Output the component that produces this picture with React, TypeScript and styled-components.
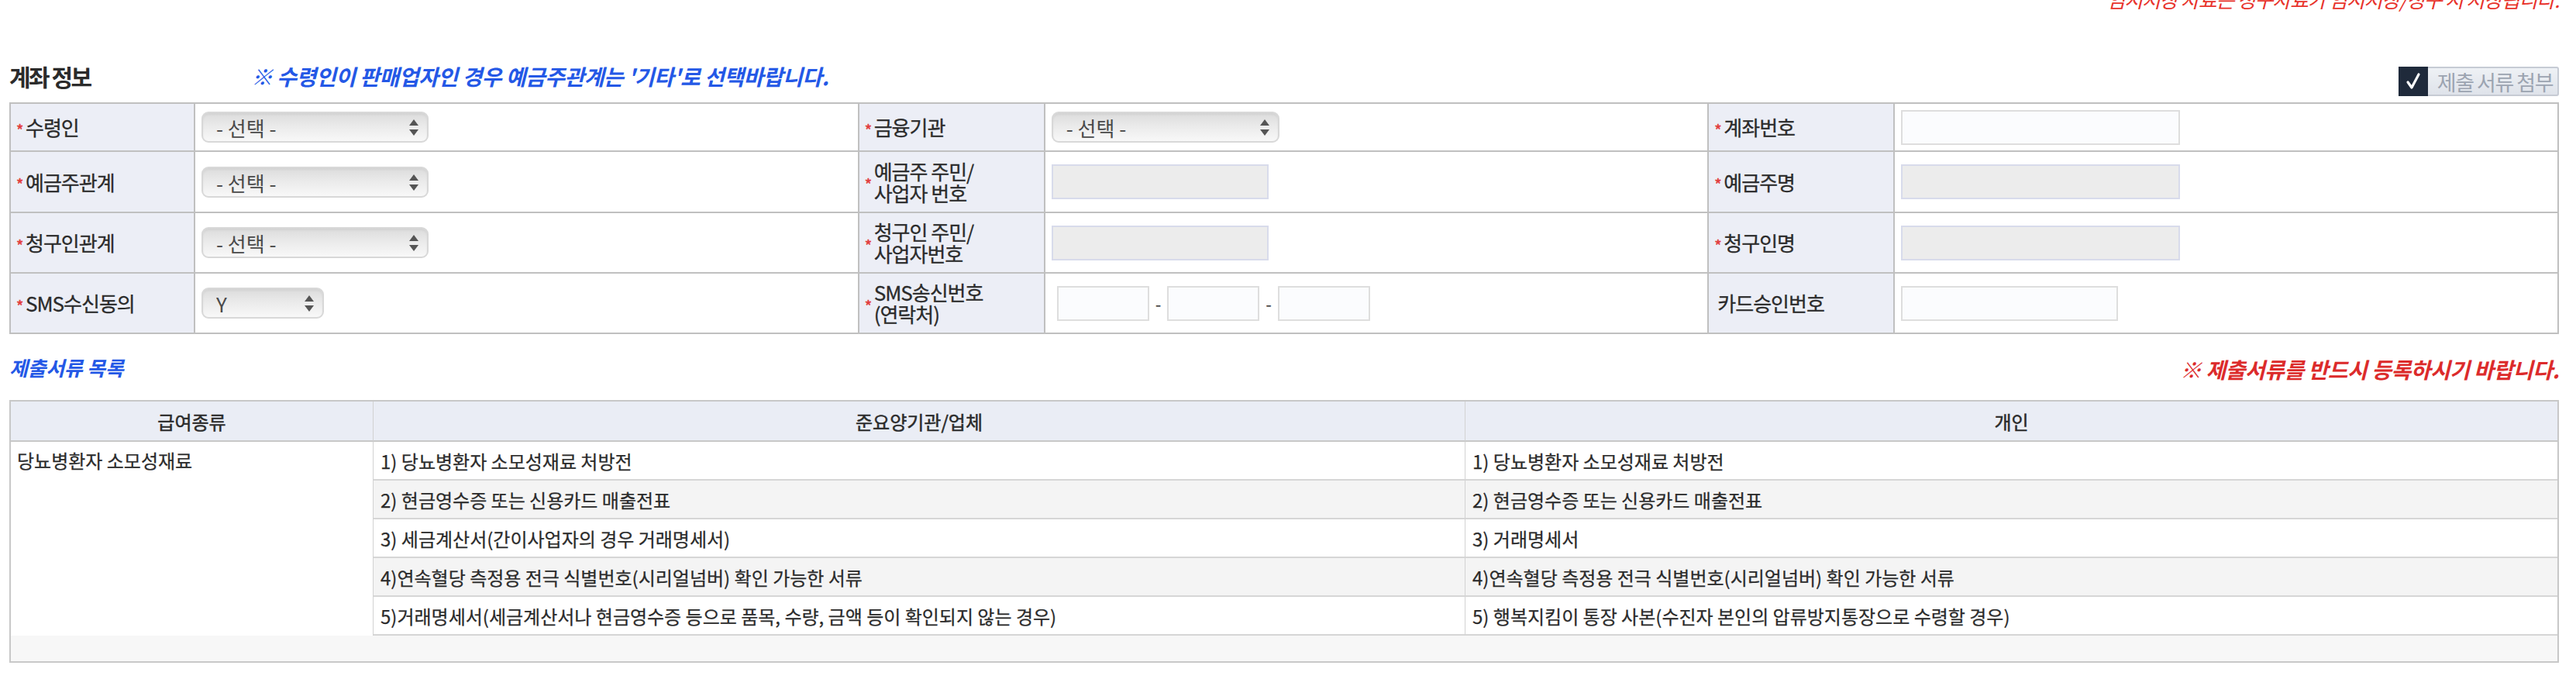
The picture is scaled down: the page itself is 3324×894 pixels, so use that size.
import React from 'react';
import styled, { createGlobalStyle } from 'styled-components';

const GlobalStyle = createGlobalStyle`
  html, body {
    margin: 0;
    padding: 0;
    background: #fff;
  }
  body {
    font-family: "Noto Sans CJK KR", "Noto Sans", sans-serif;
    color: #2b2b2b;
  }
  * {
    box-sizing: border-box;
  }
`;

const LINE = '#c0c0c0';

type Field =
  | { kind: 'select'; value: string; width: number }
  | { kind: 'input'; width: number; disabled?: boolean }
  | { kind: 'phone' };

type Cell = { label: string[]; required: boolean; field: Field };

const formRows: Cell[][] = [
  [
    { label: ['수령인'], required: true, field: { kind: 'select', value: '- 선택 -', width: 293 } },
    { label: ['금융기관'], required: true, field: { kind: 'select', value: '- 선택 -', width: 294 } },
    { label: ['계좌번호'], required: true, field: { kind: 'input', width: 360 } },
  ],
  [
    { label: ['예금주관계'], required: true, field: { kind: 'select', value: '- 선택 -', width: 293 } },
    { label: ['예금주 주민/', '사업자 번호'], required: true, field: { kind: 'input', width: 280, disabled: true } },
    { label: ['예금주명'], required: true, field: { kind: 'input', width: 360, disabled: true } },
  ],
  [
    { label: ['청구인관계'], required: true, field: { kind: 'select', value: '- 선택 -', width: 293 } },
    { label: ['청구인 주민/', '사업자번호'], required: true, field: { kind: 'input', width: 280, disabled: true } },
    { label: ['청구인명'], required: true, field: { kind: 'input', width: 360, disabled: true } },
  ],
  [
    { label: ['SMS수신동의'], required: true, field: { kind: 'select', value: 'Y', width: 158 } },
    { label: ['SMS송신번호', '(연락처)'], required: true, field: { kind: 'phone' } },
    { label: ['카드승인번호'], required: false, field: { kind: 'input', width: 280 } },
  ],
];

const agencyDocs = [
  '1) 당뇨병환자 소모성재료 처방전',
  '2) 현금영수증 또는 신용카드 매출전표',
  '3) 세금계산서(간이사업자의 경우 거래명세서)',
  '4)연속혈당 측정용 전극 식별번호(시리얼넘버) 확인 가능한 서류',
  '5)거래명세서(세금계산서나 현금영수증 등으로 품목, 수량, 금액 등이 확인되지 않는 경우)',
];

const personalDocs = [
  '1) 당뇨병환자 소모성재료 처방전',
  '2) 현금영수증 또는 신용카드 매출전표',
  '3) 거래명세서',
  '4)연속혈당 측정용 전극 식별번호(시리얼넘버) 확인 가능한 서류',
  '5) 행복지킴이 통장 사본(수진자 본인의 압류방지통장으로 수령할 경우)',
];

const Page = styled.div`
  display: flow-root;
  padding: 0 22px 0 12px;
`;

const TopNote = styled.p`
  margin: -17px 0 0;
  text-align: right;
  font-size: 26px;
  line-height: 32px;
  font-style: italic;
  color: #e8332b;
  letter-spacing: -1.2px;
`;

const SectionHead = styled.div`
  display: flex;
  align-items: flex-start;
  margin-top: 63px;
  padding-bottom: 8px;
`;

const Title = styled.h2`
  margin: 0;
  width: 312px;
  flex-shrink: 0;
  font-size: 30px;
  line-height: 40px;
  font-weight: 700;
  color: #2b2b2b;
  letter-spacing: -2.5px;
`;

const Note = styled.p<{ $tone: 'blue' | 'red' }>`
  margin: 0;
  font-size: 28px;
  line-height: 40px;
  font-weight: 700;
  font-style: italic;
  letter-spacing: -0.5px;
  color: ${p => (p.$tone === 'blue' ? '#2458e6' : '#dc2b2b')};
`;

const AttachButton = styled.button`
  margin-left: auto;
  margin-top: 8px;
  display: flex;
  align-items: stretch;
  height: 38px;
  padding: 0;
  border: 2px solid #c6cbd4;
  border-radius: 3px;
  background: linear-gradient(#eef1f5, #dfe3ea);
  font-family: inherit;
  cursor: pointer;
`;

const CheckBox = styled.span`
  width: 38px;
  margin: -2px 0 -2px -2px;
  background: #1f2a3b;
  display: flex;
  align-items: center;
  justify-content: center;
`;

const ButtonLabel = styled.span`
  display: flex;
  align-items: center;
  padding: 0 6px 0 12px;
  font-size: 27px;
  color: #9ca4b1;
  letter-spacing: -1.5px;
`;

const FormGrid = styled.div`
  display: grid;
  grid-template-columns: 238px 1fr 240px 1fr 240px 1fr;
  grid-template-rows: 62px 79px 78px 78px;
  border-top: 2px solid ${LINE};
  border-left: 2px solid ${LINE};
`;

const LabelCell = styled.div<{ $plain: boolean }>`
  display: flex;
  align-items: center;
  padding-left: ${p => (p.$plain ? 11 : 7)}px;
  background: #eceef6;
  border-right: 2px solid ${LINE};
  border-bottom: 2px solid ${LINE};
  font-size: 26px;
  line-height: 28px;
  letter-spacing: -1px;
  color: #2b2b2b;
  -webkit-text-stroke: 0.3px #2b2b2b;
`;

const Req = styled.span`
  width: 12px;
  flex-shrink: 0;
  color: #e23b3b;
  -webkit-text-stroke: 0.6px #e23b3b;
  font-size: 20px;
  line-height: 20px;
  margin-top: 7px;
`;

const LabelText = styled.span`
  display: flex;
  flex-direction: column;
`;

const ValueCell = styled.div`
  display: flex;
  align-items: center;
  padding-left: 8px;
  border-right: 2px solid ${LINE};
  border-bottom: 2px solid ${LINE};
`;

const SelectWrap = styled.div`
  position: relative;
  height: 40px;
`;

const Select = styled.select`
  appearance: none;
  width: 100%;
  height: 100%;
  padding: 0 0 0 17px;
  border: 2px solid #d8d8d8;
  border-radius: 9px;
  background: linear-gradient(#dcdcdc 0%, #eaeaea 45%, #f8f8f8 100%);
  box-shadow: inset 0 2px 3px rgba(0, 0, 0, 0.05);
  font-family: inherit;
  font-size: 26px;
  letter-spacing: 0;
  color: #4a4a4a;
  outline: none;
`;

const Arrows = styled.svg`
  position: absolute;
  right: 13px;
  top: 10px;
  pointer-events: none;
`;

const TextInput = styled.input`
  height: 45px;
  padding: 0 8px;
  border: 2px solid #dedede;
  background: #fbfcfe;
  font-family: inherit;
  font-size: 24px;
  outline: none;

  &:disabled {
    background: #ececec;
    border-color: #d8dbeb;
  }
`;

const PhoneGroup = styled.div`
  display: flex;
  align-items: center;
  gap: 8px;
  margin-left: 7px;
`;

const Dash = styled.span`
  font-size: 22px;
  color: #333;
`;

const SubHead = styled.div`
  display: flex;
  justify-content: space-between;
  align-items: flex-start;
  margin-top: 25px;
  margin-bottom: 20px;
`;

const SubTitle = styled.h3`
  margin: 0;
  font-size: 26px;
  line-height: 36px;
  font-weight: 700;
  font-style: italic;
  letter-spacing: -0.3px;
  color: #2458e6;
`;

const DocGrid = styled.div`
  display: grid;
  grid-template-columns: 468px 1fr 1fr;
  grid-template-rows: 52px repeat(5, 50px) 33px;
  border: 2px solid #c8c8c8;
  font-size: 24px;
  letter-spacing: 0;
  color: #2b2b2b;
  -webkit-text-stroke: 0.25px #2b2b2b;
`;

const HeadCell = styled.div<{ $last?: boolean }>`
  display: flex;
  align-items: center;
  justify-content: center;
  background: #eaedf5;
  border-bottom: 2px solid #c8c8c8;
  border-right: ${p => (p.$last ? 'none' : '1px solid #d2d2d2')};
  -webkit-text-stroke: 0.5px #2b2b2b;
`;

const KindCell = styled.div`
  grid-row: span 5;
  padding: 9px 8px;
  line-height: 30px;
  background: #fff;
  border-right: 1px solid #d2d2d2;
`;

const DocCell = styled.div<{ $alt: boolean; $last?: boolean }>`
  display: flex;
  align-items: center;
  padding-left: 9px;
  background: ${p => (p.$alt ? '#f4f4f4' : '#fff')};
  border-bottom: 2px solid #d6d6d6;
  border-right: ${p => (p.$last ? 'none' : '1px solid #d2d2d2')};
`;

const FootCell = styled.div`
  grid-column: 1 / -1;
  background: #f7f7f7;
`;

const SelectArrows = () => (
  <Arrows width="12" height="21" viewBox="0 0 12 21">
    <path d="M6 0 L12 8 L0 8 Z" fill="#555" />
    <path d="M0 13 L12 13 L6 21 Z" fill="#555" />
  </Arrows>
);

const FieldView = ({ field }: { field: Field }) => {
  if (field.kind === 'select') {
    return (
      <SelectWrap style={{ width: field.width }}>
        <Select defaultValue={field.value}>
          <option>{field.value}</option>
        </Select>
        <SelectArrows />
      </SelectWrap>
    );
  }
  if (field.kind === 'phone') {
    return (
      <PhoneGroup>
        <TextInput style={{ width: 119 }} />
        <Dash>-</Dash>
        <TextInput style={{ width: 119 }} />
        <Dash>-</Dash>
        <TextInput style={{ width: 119 }} />
      </PhoneGroup>
    );
  }
  return <TextInput style={{ width: field.width }} disabled={field.disabled} />;
};

const App = () => {
  return (
    <>
      <GlobalStyle />
      <Page>
        <TopNote>* 임시저장 자료는 청구자료가 임시저장/청구 시 저장됩니다.</TopNote>

        <SectionHead>
          <Title>계좌 정보</Title>
          <Note $tone="blue">※ 수령인이 판매업자인 경우 예금주관계는 '기타'로 선택바랍니다.</Note>
          <AttachButton type="button">
            <CheckBox>
              <svg width="20" height="24" viewBox="0 0 20 24">
                <path d="M3 13 L8 20 L17 3" fill="none" stroke="#fff" strokeWidth="3.2" strokeLinecap="round" strokeLinejoin="round" />
              </svg>
            </CheckBox>
            <ButtonLabel>제출 서류 첨부</ButtonLabel>
          </AttachButton>
        </SectionHead>

        <FormGrid>
          {formRows.map((row, r) =>
            row.map((cell, c) => (
              <React.Fragment key={`${r}-${c}`}>
                <LabelCell $plain={!cell.required}>
                  {cell.required && <Req>*</Req>}
                  <LabelText>
                    {cell.label.map(line => (
                      <span key={line}>{line}</span>
                    ))}
                  </LabelText>
                </LabelCell>
                <ValueCell>
                  <FieldView field={cell.field} />
                </ValueCell>
              </React.Fragment>
            ))
          )}
        </FormGrid>

        <SubHead>
          <SubTitle>제출서류 목록</SubTitle>
          <Note $tone="red">※ 제출서류를 반드시 등록하시기 바랍니다.</Note>
        </SubHead>

        <DocGrid>
          <HeadCell>급여종류</HeadCell>
          <HeadCell>준요양기관/업체</HeadCell>
          <HeadCell $last>개인</HeadCell>
          <KindCell>당뇨병환자 소모성재료</KindCell>
          {agencyDocs.map((doc, i) => (
            <React.Fragment key={i}>
              <DocCell $alt={i % 2 === 1}>{doc}</DocCell>
              <DocCell $alt={i % 2 === 1} $last>
                {personalDocs[i]}
              </DocCell>
            </React.Fragment>
          ))}
          <FootCell />
        </DocGrid>
      </Page>
    </>
  );
};

export default App;
